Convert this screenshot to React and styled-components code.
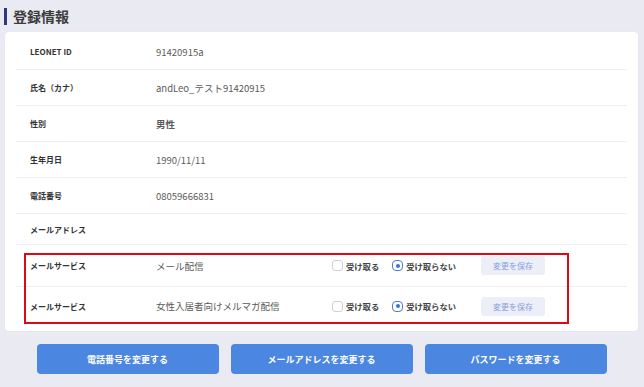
import styled, { createGlobalStyle } from 'styled-components';

const Global = createGlobalStyle`
  body {
    margin: 0;
    background: #e9eaf2;
    font-family: "Noto Sans CJK JP", "Noto Sans", sans-serif;
    color: #333;
  }
`;

const Page = styled.div`
  padding: 0 6px 0 5px;
`;

const Title = styled.h2`
  display: flex;
  align-items: center;
  gap: 6px;
  height: 32px;
  margin: 0;
  font-size: 14px;
  font-weight: 700;
  color: #3c3c3c;
  &::before {
    content: '';
    display: block;
    width: 3px;
    height: 17px;
    margin-left: -1px;
    background: #2d3b7c;
  }
`;

const Card = styled.div`
  position: relative;
  background: #fff;
  border-radius: 4px;
  padding: 2px 11px 6px;
  box-shadow: 0 0 2px rgba(0, 0, 0, 0.04);
`;

const Row = styled.div`
  display: flex;
  align-items: center;
  height: ${({ h }) => h || 36}px;
  padding-left: 14px;
  border-bottom: ${({ last }) => (last ? 'none' : '1px solid #efeff3')};
  box-sizing: border-box;
`;

const Label = styled.div`
  width: 126px;
  flex-shrink: 0;
  font-size: 8px;
  font-weight: 700;
  color: #333;
`;

const Value = styled.div`
  width: 176px;
  flex-shrink: 0;
  font-size: 9.5px;
  color: #5a5a5a;
  font-weight: ${({ bold }) => (bold ? 700 : 400)};
`;

const Choice = styled.label`
  display: flex;
  align-items: center;
  gap: 3px;
  margin-right: ${({ gapAfter }) => gapAfter}px;
  font-size: 8.3px;
  font-weight: 700;
  color: #444;
`;

const Box = styled.span`
  width: 11px;
  height: 11px;
  box-sizing: border-box;
  border: 1px solid #cfd1d8;
  border-radius: 3px;
  background: #fff;
`;

const Radio = styled.span`
  position: relative;
  width: 11px;
  height: 11px;
  box-sizing: border-box;
  border: 1px solid #4a7fd9;
  border-radius: 4px;
  background: #fff;
  &::after {
    content: '';
    position: absolute;
    left: 2.5px;
    top: 2.5px;
    width: 4px;
    height: 4px;
    border-radius: 50%;
    background: #3c72d6;
  }
`;

const SaveButton = styled.button`
  width: 64px;
  height: 19px;
  border: none;
  border-radius: 3px;
  background: #eceef8;
  color: #86a1dc;
  font-family: inherit;
  font-size: 8px;
  padding: 0;
`;

const Highlight = styled.div`
  position: absolute;
  left: 19px;
  top: 221px;
  width: 545px;
  height: 71px;
  border: 2.5px solid #dc0a14;
  box-sizing: border-box;
  pointer-events: none;
`;

const Actions = styled.div`
  display: flex;
  justify-content: center;
  gap: 12px;
  margin-top: 13px;
`;

const ActionButton = styled.button`
  width: 182px;
  height: 30px;
  border: none;
  border-radius: 4px;
  background: #4b86e0;
  color: #fff;
  font-family: inherit;
  font-size: 9px;
  font-weight: 700;
`;

const info = [
  { label: 'LEONET ID', value: '91420915a' },
  { label: '氏名（カナ）', value: 'andLeo_テスト91420915' },
  { label: '性別', value: '男性', bold: true },
  { label: '生年月日', value: '1990/11/11' },
  { label: '電話番号', value: '08059666831' },
  { label: 'メールアドレス', value: '', h: 31 },
];

const services = [
  { value: 'メール配信', h: 42 },
  { value: '女性入居者向けメルマガ配信', h: 38, last: true },
];

export default function App() {
  return (
    <Page>
      <Global />
      <Title>登録情報</Title>
      <Card>
        {info.map((r) => (
          <Row key={r.label} h={r.h}>
            <Label>{r.label}</Label>
            <Value bold={r.bold}>{r.value}</Value>
          </Row>
        ))}
        {services.map((s) => (
          <Row key={s.value} h={s.h} last={s.last}>
            <Label>メールサービス</Label>
            <Value>{s.value}</Value>
            <Choice gapAfter={13}>
              <Box />
              受け取る
            </Choice>
            <Choice gapAfter={25}>
              <Radio />
              受け取らない
            </Choice>
            <SaveButton>変更を保存</SaveButton>
          </Row>
        ))}
        <Highlight />
      </Card>
      <Actions>
        <ActionButton>電話番号を変更する</ActionButton>
        <ActionButton>メールアドレスを変更する</ActionButton>
        <ActionButton>パスワードを変更する</ActionButton>
      </Actions>
    </Page>
  );
}
